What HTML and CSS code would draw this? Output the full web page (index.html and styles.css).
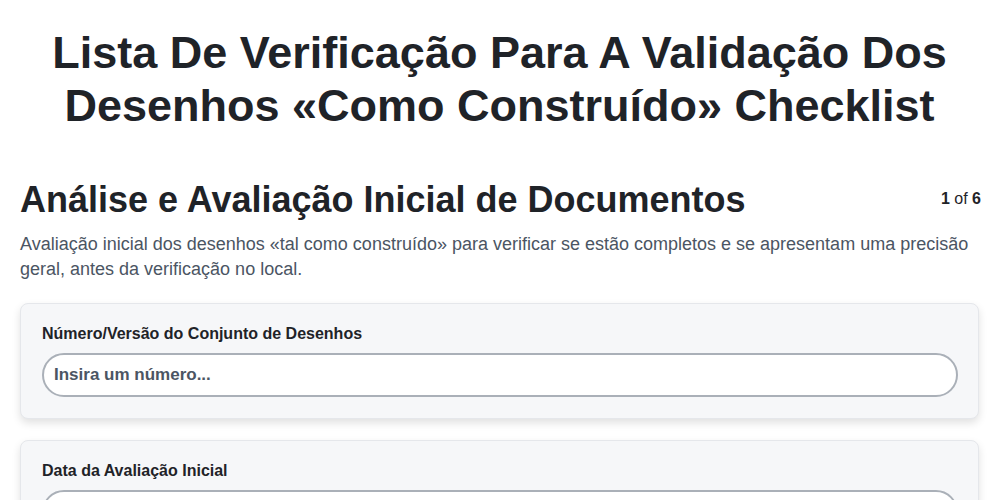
FILE: index.html
```html
<!DOCTYPE html>
<html lang="pt">
<head>
<meta charset="utf-8">
<link rel="stylesheet" href="styles.css">
</head>
<body>
<main class="page">
  <h1 class="title">Lista De Verificação Para A Validação Dos Desenhos «Como Construído» Checklist</h1>
  <section class="section">
    <div class="section-head">
      <h2 class="section-title">Análise e Avaliação Inicial de Documentos</h2>
      <div class="pager"><b>1</b> of <b>6</b></div>
    </div>
    <p class="section-desc">Avaliação inicial dos desenhos «tal como construído» para verificar se estão completos e se apresentam uma precisão geral, antes da verificação no local.</p>
    <div class="card">
      <label class="label">Número/Versão do Conjunto de Desenhos</label>
      <input class="input" type="text" placeholder="Insira um número...">
    </div>
    <div class="card">
      <label class="label">Data da Avaliação Inicial</label>
      <input class="input" type="text">
    </div>
  </section>
</main>
</body>
</html>
```
FILE: styles.css
```css
* { box-sizing: border-box; }
body {
  margin: 0;
  font-family: "Liberation Sans", Arial, sans-serif;
  color: #1f2328;
  background: #fff;
}
.page {
  padding: 26px 21px 20px 20px;
}
.title {
  margin: 0 0 46px;
  text-align: center;
  font-size: 45px;
  line-height: 53px;
  font-weight: 700;
  padding: 0 20px;
}
.section-head {
  display: flex;
  justify-content: space-between;
  align-items: flex-start;
}
.section-title {
  margin: 0;
  font-size: 36px;
  line-height: 44px;
  font-weight: 700;
}
.pager {
  font-size: 16px;
  padding-top: 12px;
  margin-right: -2px;
}
.section-desc {
  margin: 10px 0 21px;
  font-size: 18px;
  line-height: 25px;
  color: #4b5563;
}
.card {
  background: #f6f7f9;
  border: 1px solid #e5e7eb;
  border-radius: 8px;
  box-shadow: 0 4px 8px rgba(0,0,0,0.12);
  padding: 20px 20px 21px 21px;
  margin-bottom: 21px;
}
.label {
  display: block;
  font-size: 16px;
  font-weight: 700;
  line-height: 20px;
  margin-bottom: 9px;
}
.input {
  display: block;
  width: 100%;
  height: 44px;
  border: 2px solid #aab0b8;
  border-radius: 22px;
  background: #fff;
  padding: 0 10px;
  font-family: inherit;
  font-size: 17px;
  font-weight: 700;
  color: #1f2328;
}
.input::placeholder { color: #4b5563; opacity: 1; }
```
